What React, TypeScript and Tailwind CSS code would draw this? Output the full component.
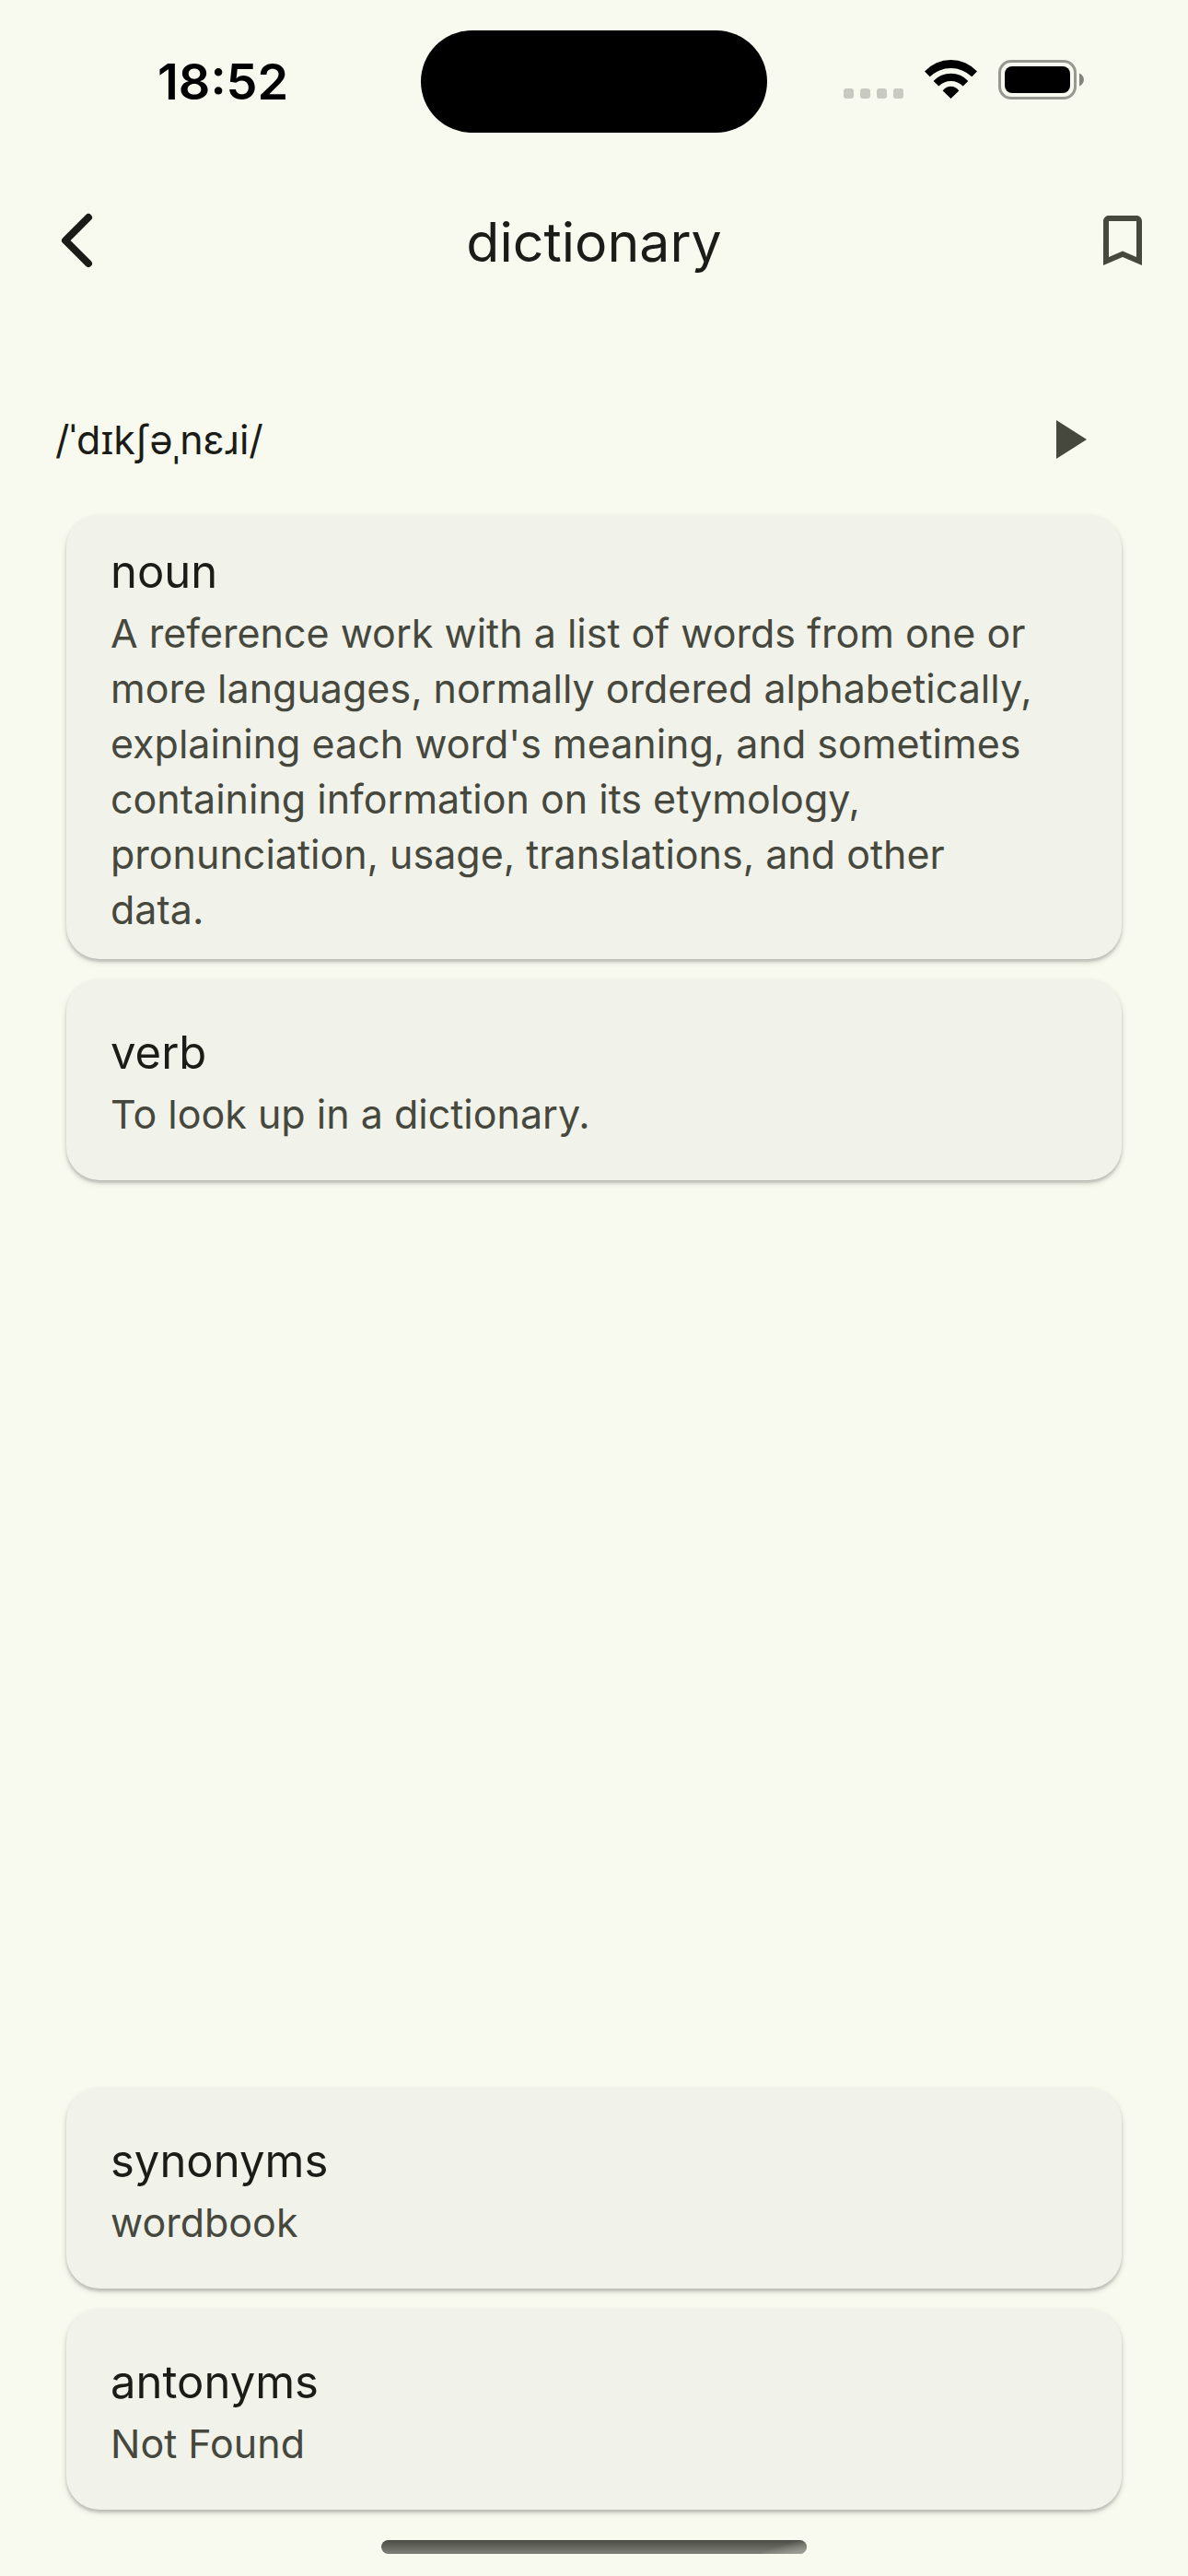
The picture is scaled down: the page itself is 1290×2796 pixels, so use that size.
import React from "react";
import { MdBookmarkBorder, MdPlayArrow } from "react-icons/md";

function StatusBar() {
  return (
    <header className="relative flex h-[177px] items-start justify-between pr-[113px] pl-[171px] text-black">
      <time className="mt-[57px] text-[54px] leading-[64px] font-semibold">18:52</time>
      <div className="absolute top-[33px] left-1/2 h-[111px] w-[376px] -translate-x-1/2 rounded-full bg-black" />
      <div className="mt-[65px] flex h-[43px] items-start">
        <div className="mt-[31px] mr-[23px] flex gap-[7px]">
          <span className="size-[11px] rounded-[3px] bg-[#c8c9c1]" />
          <span className="size-[11px] rounded-[3px] bg-[#c8c9c1]" />
          <span className="size-[11px] rounded-[3px] bg-[#c8c9c1]" />
          <span className="size-[11px] rounded-[3px] bg-[#c8c9c1]" />
        </div>
        <svg className="mr-[23px] h-[42px] w-[57px]" viewBox="0 0 57 42" aria-label="Wi-Fi">
          <path d="M0 12.6A38.7 38.7 0 0 1 57 12.6L51.3 18.3A32.8 32.8 0 0 0 5.7 18.3Z" />
          <path d="M9.7 23A25.4 25.4 0 0 1 47.3 23L41.7 28.6A18.3 18.3 0 0 0 15.3 28.6Z" />
          <path d="M19.7 33.4A10.8 10.8 0 0 1 37.3 33.4L28.5 42Z" />
        </svg>
        <svg className="h-[43px] w-[93px]" viewBox="0 0 93 43" aria-label="Battery">
          <rect x="1.5" y="1.5" width="82" height="40" rx="12.5" fill="none" stroke="#97988f" strokeWidth="3" />
          <rect x="7" y="7" width="71" height="29" rx="8" />
          <path d="M88 14.5C94.5 17 94.5 26 88 28.5Z" fill="#83847c" />
        </svg>
      </div>
    </header>
  );
}

function Card({ title, children }: { title: string; children: React.ReactNode }) {
  return (
    <article className="flex min-h-[218px] flex-col justify-center rounded-[36px] bg-[#f1f3ea] px-12 pt-[26px] pb-6 shadow-[0_3px_6px_rgba(0,0,0,0.16),0_3px_3px_rgba(0,0,0,0.13)]">
      <h2 className="text-[49px] leading-[72px] text-[#1b1c17]">{title}</h2>
      <p className="text-[43px] leading-[60px] text-[#46483e]">{children}</p>
    </article>
  );
}

export default function App() {
  return (
    <div className="flex min-h-screen flex-col bg-[#f8faf0] font-['Inter','Noto_Sans',sans-serif] text-[#1b1c17]">
      <StatusBar />
      <nav className="grid h-[168px] grid-cols-[1fr_auto_1fr] items-center">
        <button type="button" aria-label="Back" className="ml-[47px] flex size-[72px] items-center justify-center justify-self-start">
          <svg className="size-[72px]" viewBox="0 0 72 72" fill="none" stroke="currentColor" strokeWidth="8" strokeLinecap="round" strokeLinejoin="round">
            <path d="M49 11L24 36L49 61" />
          </svg>
        </button>
        <h1 className="pt-1 text-[59px] leading-[84px]">dictionary</h1>
        <button type="button" aria-label="Bookmark" className="mr-[35px] justify-self-end text-[#46483e]">
          <MdBookmarkBorder className="size-[72px]" />
        </button>
      </nav>
      <main className="flex flex-1 flex-col">
        <div className="mt-[60px] mb-[10px] flex h-36 items-center justify-between pr-[95px] pl-[60px]">
          <p className="text-[43px] leading-[60px]">/ˈdɪkʃəˌnɛɹi/</p>
          <button type="button" aria-label="Play pronunciation" className="text-[#46483e]">
            <MdPlayArrow className="size-[72px]" />
          </button>
        </div>
        <section className="flex flex-1 flex-col gap-[22px] px-[72px]">
          <Card title="noun">
            A reference work with a list of words from one or <br />
            more languages, normally ordered alphabetically, <br />
            explaining each word's meaning, and sometimes <br />
            containing information on its etymology, <br />
            pronunciation, usage, translations, and other <br />
            data.
          </Card>
          <Card title="verb">To look up in a dictionary.</Card>
        </section>
        <section className="flex flex-col gap-[22px] px-[72px]">
          <Card title="synonyms">wordbook</Card>
          <Card title="antonyms">Not Found</Card>
        </section>
      </main>
      <footer className="flex h-[72px] items-end justify-center pb-6">
        <div className="flex h-[15px] w-[462px] justify-end overflow-hidden rounded-full bg-linear-to-b from-[#4b4d45] to-[#80817a]">
          <div className="h-full w-12 bg-linear-to-br from-transparent from-40% to-[#a4a59d]" />
        </div>
      </footer>
    </div>
  );
}
